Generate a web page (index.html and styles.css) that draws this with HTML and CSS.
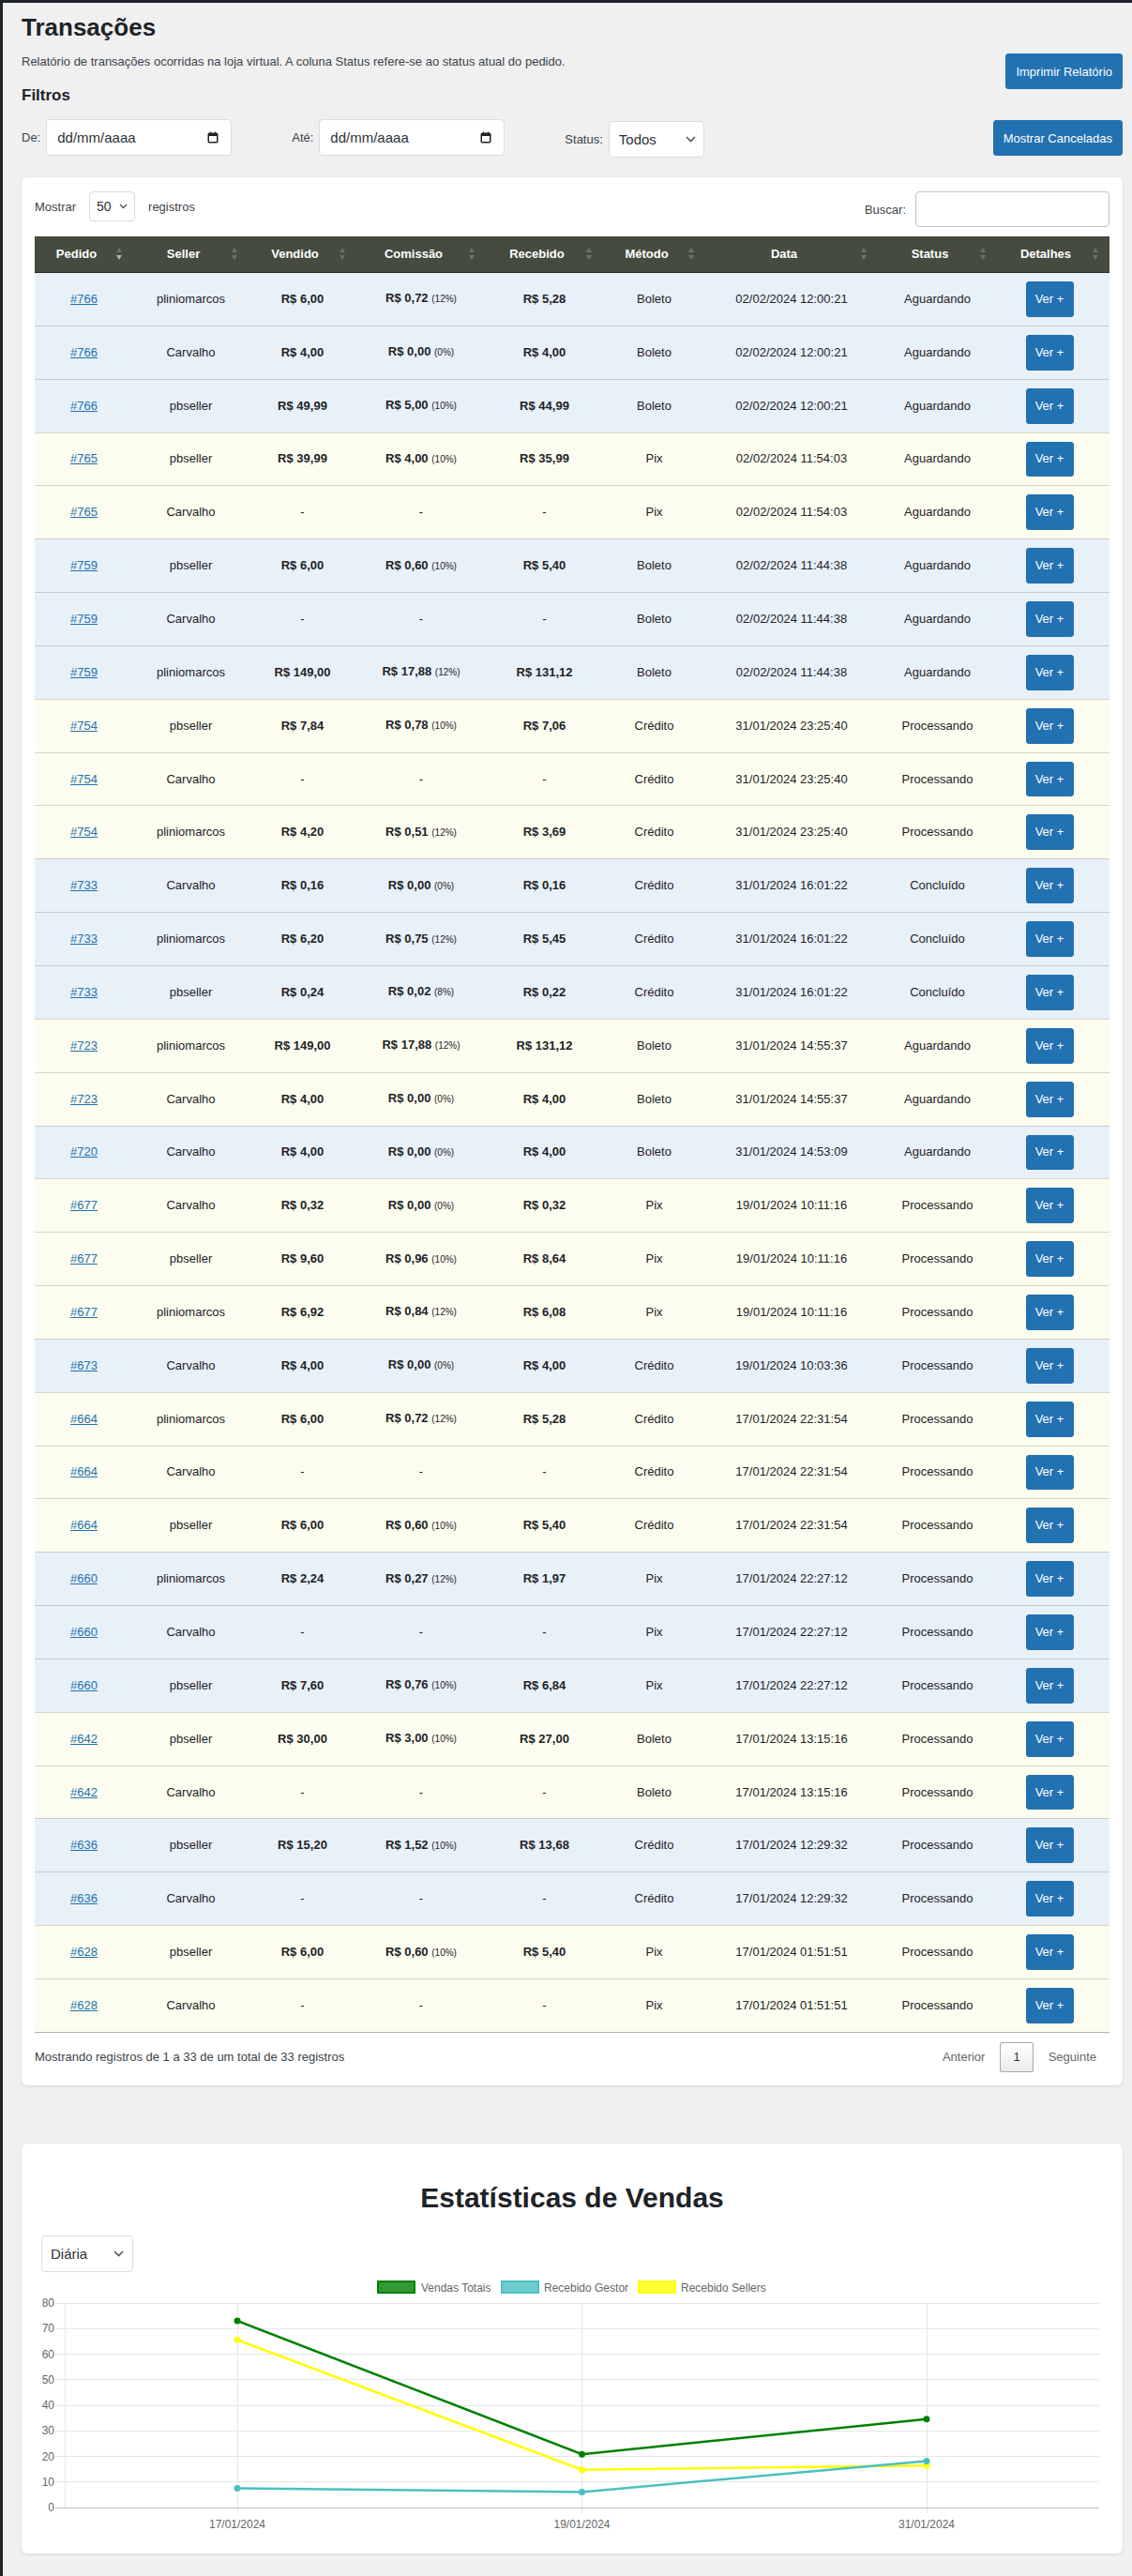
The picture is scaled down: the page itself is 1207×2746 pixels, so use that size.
FILE: index.html
```
<!DOCTYPE html>
<html lang="pt-BR">
<head>
<meta charset="utf-8">
<title>Transações</title>
<link rel="stylesheet" href="styles.css">
</head>
<body class="admin">
<div class="wrap">
  <h1 class="page-title">Transações</h1>
  <div class="head-row">
    <div class="head-left">
      <p class="desc">Relatório de transações ocorridas na loja virtual. A coluna Status refere-se ao status atual do pedido.</p>
      <h2 class="filters-title">Filtros</h2>
    </div>
    <button class="btn-primary">Imprimir Relatório</button>
  </div>

  <div class="filter-row">
    <div class="field">
      <span class="field-label">De:</span>
      <div class="date-input"><span>dd/mm/aaaa</span><svg width="12" height="13" viewBox="0 0 12 13"><rect x="1.25" y="2.25" width="9.5" height="9.5" rx="1" fill="none" stroke="#222" stroke-width="1.5"/><rect x="1" y="2" width="10" height="3" fill="#222"/><path d="M3.5 0.5v2M8.5 0.5v2" stroke="#222" stroke-width="1.3"/></svg></div>
    </div>
    <div class="field field-gap">
      <span class="field-label">Até:</span>
      <div class="date-input"><span>dd/mm/aaaa</span><svg width="12" height="13" viewBox="0 0 12 13"><rect x="1.25" y="2.25" width="9.5" height="9.5" rx="1" fill="none" stroke="#222" stroke-width="1.5"/><rect x="1" y="2" width="10" height="3" fill="#222"/><path d="M3.5 0.5v2M8.5 0.5v2" stroke="#222" stroke-width="1.3"/></svg></div>
    </div>
    <div class="field field-gap field-status">
      <span class="field-label">Status:</span>
      <div class="select select-status"><span>Todos</span><svg width="11" height="7" viewBox="0 0 11 7"><path d="M1 1l4.5 4.5L10 1" fill="none" stroke="#50575e" stroke-width="1.6"/></svg></div>
    </div>
    <button class="btn-primary btn-cancel">Mostrar Canceladas</button>
  </div>

  <div class="card table-card">
    <div class="dt-top">
      <div class="dt-length">
        <span>Mostrar</span>
        <div class="select select-len"><span>50</span><svg width="9" height="6" viewBox="0 0 9 6"><path d="M1 1l3.5 3.5L8 1" fill="none" stroke="#50575e" stroke-width="1.4"/></svg></div>
        <span>registros</span>
      </div>
      <div class="dt-search">
        <span>Buscar:</span>
        <div class="search-input"></div>
      </div>
    </div>

    <table class="dt">
      <colgroup>
        <col class="c1"><col class="c2"><col class="c3"><col class="c4"><col class="c5"><col class="c6"><col class="c7"><col class="c8"><col class="c9">
      </colgroup>
      <thead>
        <tr>
          <th class="desc">Pedido</th><th>Seller</th><th>Vendido</th><th>Comissão</th><th>Recebido</th><th>Método</th><th>Data</th><th>Status</th><th>Detalhes</th>
        </tr>
      </thead>
      <tbody>
        <tr class="rb"><td><a class="order" href="#">#766</a></td><td>pliniomarcos</td><td><b>R$ 6,00</b></td><td><b>R$ 0,72</b> <small class="pct">(12%)</small></td><td><b>R$ 5,28</b></td><td>Boleto</td><td>02/02/2024 12:00:21</td><td>Aguardando</td><td class="td-btn"><button class="btn-ver">Ver +</button></td></tr>
        <tr class="rb"><td><a class="order" href="#">#766</a></td><td>Carvalho</td><td><b>R$ 4,00</b></td><td><b>R$ 0,00</b> <small class="pct">(0%)</small></td><td><b>R$ 4,00</b></td><td>Boleto</td><td>02/02/2024 12:00:21</td><td>Aguardando</td><td class="td-btn"><button class="btn-ver">Ver +</button></td></tr>
        <tr class="rb"><td><a class="order" href="#">#766</a></td><td>pbseller</td><td><b>R$ 49,99</b></td><td><b>R$ 5,00</b> <small class="pct">(10%)</small></td><td><b>R$ 44,99</b></td><td>Boleto</td><td>02/02/2024 12:00:21</td><td>Aguardando</td><td class="td-btn"><button class="btn-ver">Ver +</button></td></tr>
        <tr class="ry"><td><a class="order" href="#">#765</a></td><td>pbseller</td><td><b>R$ 39,99</b></td><td><b>R$ 4,00</b> <small class="pct">(10%)</small></td><td><b>R$ 35,99</b></td><td>Pix</td><td>02/02/2024 11:54:03</td><td>Aguardando</td><td class="td-btn"><button class="btn-ver">Ver +</button></td></tr>
        <tr class="ry"><td><a class="order" href="#">#765</a></td><td>Carvalho</td><td>-</td><td>-</td><td>-</td><td>Pix</td><td>02/02/2024 11:54:03</td><td>Aguardando</td><td class="td-btn"><button class="btn-ver">Ver +</button></td></tr>
        <tr class="rb"><td><a class="order" href="#">#759</a></td><td>pbseller</td><td><b>R$ 6,00</b></td><td><b>R$ 0,60</b> <small class="pct">(10%)</small></td><td><b>R$ 5,40</b></td><td>Boleto</td><td>02/02/2024 11:44:38</td><td>Aguardando</td><td class="td-btn"><button class="btn-ver">Ver +</button></td></tr>
        <tr class="rb"><td><a class="order" href="#">#759</a></td><td>Carvalho</td><td>-</td><td>-</td><td>-</td><td>Boleto</td><td>02/02/2024 11:44:38</td><td>Aguardando</td><td class="td-btn"><button class="btn-ver">Ver +</button></td></tr>
        <tr class="rb"><td><a class="order" href="#">#759</a></td><td>pliniomarcos</td><td><b>R$ 149,00</b></td><td><b>R$ 17,88</b> <small class="pct">(12%)</small></td><td><b>R$ 131,12</b></td><td>Boleto</td><td>02/02/2024 11:44:38</td><td>Aguardando</td><td class="td-btn"><button class="btn-ver">Ver +</button></td></tr>
        <tr class="ry"><td><a class="order" href="#">#754</a></td><td>pbseller</td><td><b>R$ 7,84</b></td><td><b>R$ 0,78</b> <small class="pct">(10%)</small></td><td><b>R$ 7,06</b></td><td>Crédito</td><td>31/01/2024 23:25:40</td><td>Processando</td><td class="td-btn"><button class="btn-ver">Ver +</button></td></tr>
        <tr class="ry"><td><a class="order" href="#">#754</a></td><td>Carvalho</td><td>-</td><td>-</td><td>-</td><td>Crédito</td><td>31/01/2024 23:25:40</td><td>Processando</td><td class="td-btn"><button class="btn-ver">Ver +</button></td></tr>
        <tr class="ry"><td><a class="order" href="#">#754</a></td><td>pliniomarcos</td><td><b>R$ 4,20</b></td><td><b>R$ 0,51</b> <small class="pct">(12%)</small></td><td><b>R$ 3,69</b></td><td>Crédito</td><td>31/01/2024 23:25:40</td><td>Processando</td><td class="td-btn"><button class="btn-ver">Ver +</button></td></tr>
        <tr class="rb"><td><a class="order" href="#">#733</a></td><td>Carvalho</td><td><b>R$ 0,16</b></td><td><b>R$ 0,00</b> <small class="pct">(0%)</small></td><td><b>R$ 0,16</b></td><td>Crédito</td><td>31/01/2024 16:01:22</td><td>Concluído</td><td class="td-btn"><button class="btn-ver">Ver +</button></td></tr>
        <tr class="rb"><td><a class="order" href="#">#733</a></td><td>pliniomarcos</td><td><b>R$ 6,20</b></td><td><b>R$ 0,75</b> <small class="pct">(12%)</small></td><td><b>R$ 5,45</b></td><td>Crédito</td><td>31/01/2024 16:01:22</td><td>Concluído</td><td class="td-btn"><button class="btn-ver">Ver +</button></td></tr>
        <tr class="rb"><td><a class="order" href="#">#733</a></td><td>pbseller</td><td><b>R$ 0,24</b></td><td><b>R$ 0,02</b> <small class="pct">(8%)</small></td><td><b>R$ 0,22</b></td><td>Crédito</td><td>31/01/2024 16:01:22</td><td>Concluído</td><td class="td-btn"><button class="btn-ver">Ver +</button></td></tr>
        <tr class="ry"><td><a class="order" href="#">#723</a></td><td>pliniomarcos</td><td><b>R$ 149,00</b></td><td><b>R$ 17,88</b> <small class="pct">(12%)</small></td><td><b>R$ 131,12</b></td><td>Boleto</td><td>31/01/2024 14:55:37</td><td>Aguardando</td><td class="td-btn"><button class="btn-ver">Ver +</button></td></tr>
        <tr class="ry"><td><a class="order" href="#">#723</a></td><td>Carvalho</td><td><b>R$ 4,00</b></td><td><b>R$ 0,00</b> <small class="pct">(0%)</small></td><td><b>R$ 4,00</b></td><td>Boleto</td><td>31/01/2024 14:55:37</td><td>Aguardando</td><td class="td-btn"><button class="btn-ver">Ver +</button></td></tr>
        <tr class="rb"><td><a class="order" href="#">#720</a></td><td>Carvalho</td><td><b>R$ 4,00</b></td><td><b>R$ 0,00</b> <small class="pct">(0%)</small></td><td><b>R$ 4,00</b></td><td>Boleto</td><td>31/01/2024 14:53:09</td><td>Aguardando</td><td class="td-btn"><button class="btn-ver">Ver +</button></td></tr>
        <tr class="ry"><td><a class="order" href="#">#677</a></td><td>Carvalho</td><td><b>R$ 0,32</b></td><td><b>R$ 0,00</b> <small class="pct">(0%)</small></td><td><b>R$ 0,32</b></td><td>Pix</td><td>19/01/2024 10:11:16</td><td>Processando</td><td class="td-btn"><button class="btn-ver">Ver +</button></td></tr>
        <tr class="ry"><td><a class="order" href="#">#677</a></td><td>pbseller</td><td><b>R$ 9,60</b></td><td><b>R$ 0,96</b> <small class="pct">(10%)</small></td><td><b>R$ 8,64</b></td><td>Pix</td><td>19/01/2024 10:11:16</td><td>Processando</td><td class="td-btn"><button class="btn-ver">Ver +</button></td></tr>
        <tr class="ry"><td><a class="order" href="#">#677</a></td><td>pliniomarcos</td><td><b>R$ 6,92</b></td><td><b>R$ 0,84</b> <small class="pct">(12%)</small></td><td><b>R$ 6,08</b></td><td>Pix</td><td>19/01/2024 10:11:16</td><td>Processando</td><td class="td-btn"><button class="btn-ver">Ver +</button></td></tr>
        <tr class="rb"><td><a class="order" href="#">#673</a></td><td>Carvalho</td><td><b>R$ 4,00</b></td><td><b>R$ 0,00</b> <small class="pct">(0%)</small></td><td><b>R$ 4,00</b></td><td>Crédito</td><td>19/01/2024 10:03:36</td><td>Processando</td><td class="td-btn"><button class="btn-ver">Ver +</button></td></tr>
        <tr class="ry"><td><a class="order" href="#">#664</a></td><td>pliniomarcos</td><td><b>R$ 6,00</b></td><td><b>R$ 0,72</b> <small class="pct">(12%)</small></td><td><b>R$ 5,28</b></td><td>Crédito</td><td>17/01/2024 22:31:54</td><td>Processando</td><td class="td-btn"><button class="btn-ver">Ver +</button></td></tr>
        <tr class="ry"><td><a class="order" href="#">#664</a></td><td>Carvalho</td><td>-</td><td>-</td><td>-</td><td>Crédito</td><td>17/01/2024 22:31:54</td><td>Processando</td><td class="td-btn"><button class="btn-ver">Ver +</button></td></tr>
        <tr class="ry"><td><a class="order" href="#">#664</a></td><td>pbseller</td><td><b>R$ 6,00</b></td><td><b>R$ 0,60</b> <small class="pct">(10%)</small></td><td><b>R$ 5,40</b></td><td>Crédito</td><td>17/01/2024 22:31:54</td><td>Processando</td><td class="td-btn"><button class="btn-ver">Ver +</button></td></tr>
        <tr class="rb"><td><a class="order" href="#">#660</a></td><td>pliniomarcos</td><td><b>R$ 2,24</b></td><td><b>R$ 0,27</b> <small class="pct">(12%)</small></td><td><b>R$ 1,97</b></td><td>Pix</td><td>17/01/2024 22:27:12</td><td>Processando</td><td class="td-btn"><button class="btn-ver">Ver +</button></td></tr>
        <tr class="rb"><td><a class="order" href="#">#660</a></td><td>Carvalho</td><td>-</td><td>-</td><td>-</td><td>Pix</td><td>17/01/2024 22:27:12</td><td>Processando</td><td class="td-btn"><button class="btn-ver">Ver +</button></td></tr>
        <tr class="rb"><td><a class="order" href="#">#660</a></td><td>pbseller</td><td><b>R$ 7,60</b></td><td><b>R$ 0,76</b> <small class="pct">(10%)</small></td><td><b>R$ 6,84</b></td><td>Pix</td><td>17/01/2024 22:27:12</td><td>Processando</td><td class="td-btn"><button class="btn-ver">Ver +</button></td></tr>
        <tr class="ry"><td><a class="order" href="#">#642</a></td><td>pbseller</td><td><b>R$ 30,00</b></td><td><b>R$ 3,00</b> <small class="pct">(10%)</small></td><td><b>R$ 27,00</b></td><td>Boleto</td><td>17/01/2024 13:15:16</td><td>Processando</td><td class="td-btn"><button class="btn-ver">Ver +</button></td></tr>
        <tr class="ry"><td><a class="order" href="#">#642</a></td><td>Carvalho</td><td>-</td><td>-</td><td>-</td><td>Boleto</td><td>17/01/2024 13:15:16</td><td>Processando</td><td class="td-btn"><button class="btn-ver">Ver +</button></td></tr>
        <tr class="rb"><td><a class="order" href="#">#636</a></td><td>pbseller</td><td><b>R$ 15,20</b></td><td><b>R$ 1,52</b> <small class="pct">(10%)</small></td><td><b>R$ 13,68</b></td><td>Crédito</td><td>17/01/2024 12:29:32</td><td>Processando</td><td class="td-btn"><button class="btn-ver">Ver +</button></td></tr>
        <tr class="rb"><td><a class="order" href="#">#636</a></td><td>Carvalho</td><td>-</td><td>-</td><td>-</td><td>Crédito</td><td>17/01/2024 12:29:32</td><td>Processando</td><td class="td-btn"><button class="btn-ver">Ver +</button></td></tr>
        <tr class="ry"><td><a class="order" href="#">#628</a></td><td>pbseller</td><td><b>R$ 6,00</b></td><td><b>R$ 0,60</b> <small class="pct">(10%)</small></td><td><b>R$ 5,40</b></td><td>Pix</td><td>17/01/2024 01:51:51</td><td>Processando</td><td class="td-btn"><button class="btn-ver">Ver +</button></td></tr>
        <tr class="ry"><td><a class="order" href="#">#628</a></td><td>Carvalho</td><td>-</td><td>-</td><td>-</td><td>Pix</td><td>17/01/2024 01:51:51</td><td>Processando</td><td class="td-btn"><button class="btn-ver">Ver +</button></td></tr>
      </tbody>
    </table>

    <div class="dt-bottom">
      <div class="dt-info">Mostrando registros de 1 a 33 de um total de 33 registros</div>
      <div class="pager">
        <span class="pg">Anterior</span>
        <span class="pg pg-current">1</span>
        <span class="pg">Seguinte</span>
      </div>
    </div>
  </div>

  <div class="card stats-card">
    <h2 class="stats-title">Estatísticas de Vendas</h2>
    <div class="select select-period"><span>Diária</span><svg width="11" height="7" viewBox="0 0 11 7"><path d="M1 1l4.5 4.5L10 1" fill="none" stroke="#50575e" stroke-width="1.6"/></svg></div>
    <svg class="chart" width="1132" height="280" viewBox="0 0 1132 280">
      <g class="legend">
        <rect x="359" y="4" width="39" height="12" fill="#339933" stroke="#008000" stroke-width="2"/>
        <text x="405" y="14.5">Vendas Totais</text>
        <rect x="491" y="4" width="39" height="12" fill="#6fcdcd" stroke="#4bc0c0" stroke-width="2"/>
        <text x="536" y="14.5">Recebido Gestor</text>
        <rect x="637" y="4" width="39" height="12" fill="#ffff33" stroke="#ffff00" stroke-width="2"/>
        <text x="682" y="14.5">Recebido Sellers</text>
      </g>
      <g class="grid">
        <line x1="15" y1="27.5" x2="1128" y2="27.5"/>
        <line x1="15" y1="54.5" x2="1128" y2="54.5"/>
        <line x1="15" y1="81.5" x2="1128" y2="81.5"/>
        <line x1="15" y1="108.5" x2="1128" y2="108.5"/>
        <line x1="15" y1="136.5" x2="1128" y2="136.5"/>
        <line x1="15" y1="163.5" x2="1128" y2="163.5"/>
        <line x1="15" y1="190.5" x2="1128" y2="190.5"/>
        <line x1="15" y1="217.5" x2="1128" y2="217.5"/>
        <line x1="25.5" y1="27" x2="25.5" y2="245"/>
        <line x1="209.5" y1="27" x2="209.5" y2="251"/>
        <line x1="576.5" y1="27" x2="576.5" y2="251"/>
        <line x1="944.5" y1="27" x2="944.5" y2="251"/>
      </g>
      <line class="zero" x1="15" y1="245.5" x2="1128" y2="245.5"/>
      <g class="ylabels">
        <text x="14" y="31">80</text>
        <text x="14" y="58">70</text>
        <text x="14" y="85.5">60</text>
        <text x="14" y="112.5">50</text>
        <text x="14" y="140">40</text>
        <text x="14" y="167">30</text>
        <text x="14" y="194.5">20</text>
        <text x="14" y="221.5">10</text>
        <text x="14" y="249">0</text>
      </g>
      <g class="xlabels">
        <text x="209" y="267">17/01/2024</text>
        <text x="576.5" y="267">19/01/2024</text>
        <text x="944" y="267">31/01/2024</text>
      </g>
      <polyline points="209,66.3 576.5,204.7 944,200.3" fill="none" stroke="#ffff00" stroke-width="2.5"/>
      <circle cx="209" cy="66.3" r="3.5" fill="#ffff00"/>
      <circle cx="576.5" cy="204.7" r="3.5" fill="#ffff00"/>
      <circle cx="944" cy="200.3" r="3.5" fill="#ffff00"/>
      <polyline points="209,224.6 576.5,228.5 944,195.4" fill="none" stroke="#4bc0c0" stroke-width="2.5"/>
      <circle cx="209" cy="224.6" r="3.5" fill="#4bc0c0"/>
      <circle cx="576.5" cy="228.5" r="3.5" fill="#4bc0c0"/>
      <circle cx="944" cy="195.4" r="3.5" fill="#4bc0c0"/>
      <polyline points="209,46 576.5,188.2 944,150.7" fill="none" stroke="#008000" stroke-width="2.5"/>
      <circle cx="209" cy="46" r="3.5" fill="#008000"/>
      <circle cx="576.5" cy="188.2" r="3.5" fill="#008000"/>
      <circle cx="944" cy="150.7" r="3.5" fill="#008000"/>
    </svg>
  </div>
</div>
</body>
</html>
```
FILE: styles.css
```
* { box-sizing: border-box; }
html, body { margin: 0; }
.admin {
  background: #f0f0f1;
  border-top: 3px solid #1d2327;
  border-left: 3px solid #1d2327;
  font-family: "Liberation Sans", Arial, sans-serif;
  font-size: 13px;
  color: #3c434a;
  min-height: 2746px;
}
.wrap { padding: 0 10px 20px 20px; }

.page-title {
  margin: 0;
  padding-top: 11px;
  font-size: 26px;
  line-height: 30px;
  font-weight: 700;
  color: #1d2327;
}
.head-row {
  display: flex;
  justify-content: space-between;
  align-items: flex-start;
  margin-top: 13px;
}
.desc { margin: 0; font-size: 13px; line-height: 18px; color: #3c434a; }
.filters-title {
  margin: 16px 0 0;
  font-size: 17px;
  line-height: 22px;
  font-weight: 700;
  color: #1d2327;
}
.btn-primary {
  font: inherit;
  font-size: 13px;
  height: 38px;
  padding: 0 10px;
  background: #2271b1;
  border: 1px solid #2271b1;
  border-radius: 3px;
  color: #fff;
  cursor: pointer;
}

.filter-row {
  display: flex;
  align-items: flex-start;
  margin-top: 14px;
}
.field { display: flex; align-items: center; gap: 6px; }
.field-gap { margin-left: 64px; }
.field-status { margin-top: 2px; }
.field-label { color: #3c434a; font-size: 13px; }
.date-input {
  width: 198px;
  height: 39px;
  display: flex;
  align-items: center;
  justify-content: space-between;
  padding: 0 13px 0 11px;
  background: #fff;
  border: 1px solid #dcdcde;
  border-radius: 4px;
  font-size: 15px;
  color: #2c3338;
}
.select {
  display: flex;
  align-items: center;
  justify-content: space-between;
  background: #fff;
  border: 1px solid #dcdcde;
  border-radius: 4px;
  color: #2c3338;
}
.select-status { width: 102px; height: 39px; padding: 0 8px 0 10px; font-size: 15px; }
.btn-cancel { margin-left: auto; margin-top: 1px; }

.card {
  background: #fff;
  border-radius: 6px;
  box-shadow: 0 1px 3px rgba(0, 0, 0, 0.12);
}
.table-card { margin-top: 21px; padding: 15px 14px 14px; }

.dt-top {
  display: flex;
  justify-content: space-between;
  align-items: flex-start;
  height: 38px;
  margin-bottom: 10px;
}
.dt-length { display: flex; align-items: center; height: 32px; }
.select-len {
  width: 49px;
  height: 32px;
  padding: 0 7px;
  margin: 0 14px 0 14px;
  font-size: 14px;
}
.dt-search { display: flex; align-items: center; gap: 10px; height: 38px; }
.search-input {
  width: 207px;
  height: 38px;
  border: 1px solid #c3c4c7;
  border-radius: 4px;
  background: #fff;
}

.dt {
  width: 100%;
  table-layout: fixed;
  border-collapse: separate;
  border-spacing: 0;
  border-bottom: 1px solid rgba(0, 0, 0, 0.3);
}
.c1 { width: 105px; }
.c2 { width: 123px; }
.c3 { width: 115px; }
.c4 { width: 138px; }
.c5 { width: 125px; }
.c6 { width: 109px; }
.c7 { width: 184px; }
.c8 { width: 127px; }
.c9 { width: 120px; }
.dt th {
  position: relative;
  background: #454b3e;
  color: #fff;
  font-size: 13px;
  font-weight: 700;
  line-height: 18px;
  padding: 10px 26px 10px 10px;
  text-align: center;
  border-bottom: 1px solid #2a2e25;
}
.dt th::before,
.dt th::after {
  content: "";
  position: absolute;
  right: 12px;
  border-left: 3px solid transparent;
  border-right: 3px solid transparent;
  opacity: 0.22;
}
.dt th::before { bottom: 50%; margin-bottom: 2px; border-bottom: 5px solid #fff; }
.dt th::after { top: 50%; margin-top: 1px; border-top: 5px solid #fff; }
.dt th.desc::after { opacity: 0.6; }

.dt td {
  padding: 9px 10px;
  text-align: center;
  vertical-align: middle;
  font-size: 13px;
  line-height: 18px;
  color: #1d2327;
  border-top: 1px solid rgba(0, 0, 0, 0.15);
}
.dt tbody tr:first-child td { border-top: 0; }
.rb td { background: #e8f0f8; }
.ry td { background: #fcfdee; }
.dt td.td-btn { padding-right: 18px; }
.order { color: #2271b1; text-decoration: underline; }
.pct { font-size: 10px; font-weight: 400; }
.btn-ver {
  display: flex;
  align-items: center;
  justify-content: center;
  width: 51px;
  height: 37.85px;
  margin: 0 auto;
  padding: 0;
  font: inherit;
  font-size: 13px;
  color: #fff;
  background: #2271b1;
  border: 1px solid #2271b1;
  border-radius: 3px;
}

.dt-bottom {
  display: flex;
  justify-content: space-between;
  align-items: center;
  margin-top: 10px;
}
.dt-info { color: #3c434a; }
.pager { display: flex; }
.pg {
  display: block;
  margin-left: 2px;
  padding: 6.5px 13px;
  line-height: 17px;
  border: 1px solid transparent;
  border-radius: 2px;
  color: #666;
  text-align: center;
}
.pg-current {
  color: #333;
  border-color: #a8a8a8;
  background: linear-gradient(to bottom, #ffffff 0%, #ebebeb 100%);
}

.stats-card { margin-top: 62px; padding: 41px 21px 14px; }
.stats-title {
  margin: 0;
  text-align: center;
  font-size: 30px;
  line-height: 34px;
  font-weight: 700;
  color: #1d2327;
}
.select-period {
  width: 98px;
  height: 39px;
  margin-top: 23px;
  padding: 0 9px;
  font-size: 15px;
}
.chart { display: block; margin-top: 6px; }
.chart text { font-family: "Liberation Sans", Arial, sans-serif; font-size: 12px; fill: #666; }
.chart .grid line { stroke: #e6e6e6; stroke-width: 1; }
.chart .zero { stroke: #bfbfbf; stroke-width: 1; }
.chart .ylabels text { text-anchor: end; }
.chart .xlabels text { text-anchor: middle; }
```
